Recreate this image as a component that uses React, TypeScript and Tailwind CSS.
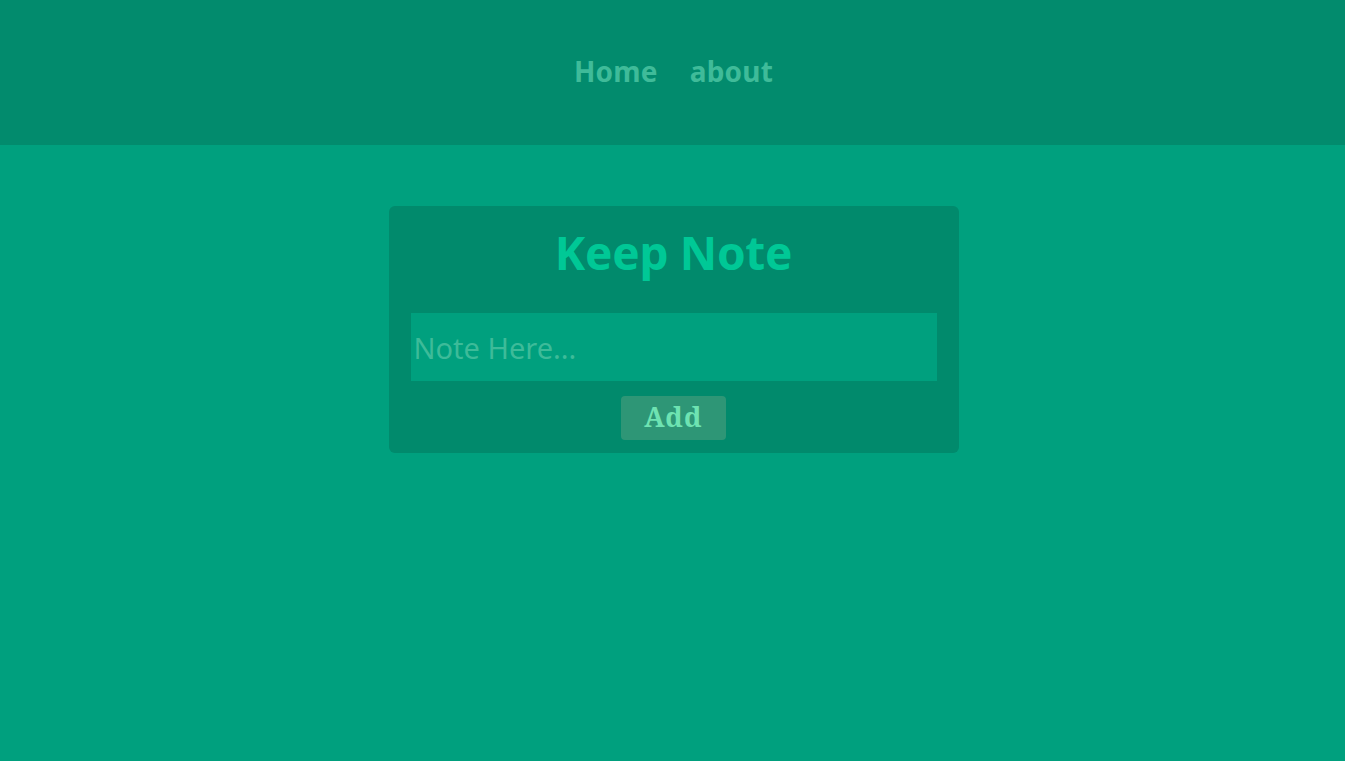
import React from "react";

export default function App() {
  return (
    <div className="min-h-[761px] w-full bg-[#00a07e]" style={{ fontFamily: '"Noto Sans", "Open Sans", sans-serif' }}>
      <header className="h-[145px] bg-[#028b6d] flex items-center justify-center">
        <nav className="flex gap-[32px] text-[28px] font-bold text-[#3fbb99] -mt-[4px] ml-[2px] tracking-[0.2px]">
          <a>Home</a>
          <a>about</a>
        </nav>
      </header>
      <div className="flex justify-center pt-[61px] pl-[2px]">
        <div className="w-[570px] h-[247px] rounded-md bg-[#018a6c] px-[22px] flex flex-col items-center">
          <h1 className="text-[46px] leading-none font-bold text-[#00c896] mt-[23px] tracking-[-0.3px]">Keep Note</h1>
          <input
            className="mt-[38px] w-full h-[68px] bg-[#00a07e] px-[3px] text-[29px] text-[#3dbb99] placeholder-[#3dbb99] outline-none"
            placeholder="Note Here..."
          />
          <button
            className="mt-[15px] w-[105px] h-[44px] pb-[4px] rounded bg-[#2e9676] text-[27px] leading-none font-bold tracking-[1.2px] text-[#6ee3b2]"
            style={{ fontFamily: '"Noto Serif", "DejaVu Serif", serif' }}
          >
            Add
          </button>
        </div>
      </div>
    </div>
  );
}
